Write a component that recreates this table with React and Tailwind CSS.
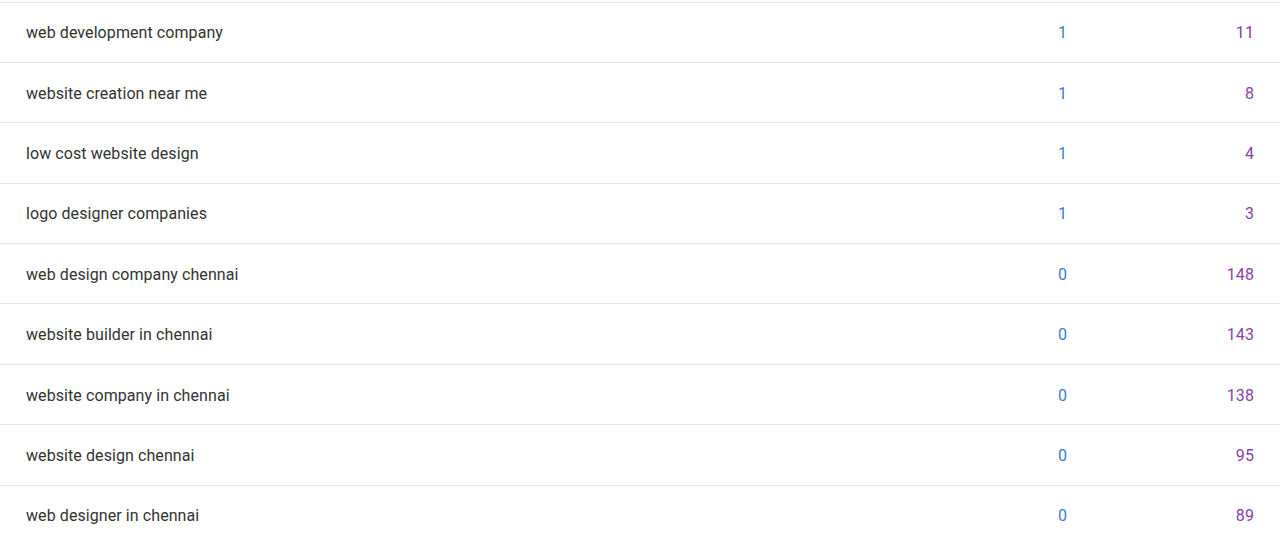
import React from "react";

const rows = [
  { query: "web development company", clicks: 1, impressions: 11 },
  { query: "website creation near me", clicks: 1, impressions: 8 },
  { query: "low cost website design", clicks: 1, impressions: 4 },
  { query: "logo designer companies", clicks: 1, impressions: 3 },
  { query: "web design company chennai", clicks: 0, impressions: 148 },
  { query: "website builder in chennai", clicks: 0, impressions: 143 },
  { query: "website company in chennai", clicks: 0, impressions: 138 },
  { query: "website design chennai", clicks: 0, impressions: 95 },
  { query: "web designer in chennai", clicks: 0, impressions: 89 },
];

export default function App() {
  return (
    <div className="h-[533px] overflow-hidden bg-white pt-[1.5px] font-['Roboto',sans-serif] text-[16px] tracking-[0.08px]">
      {rows.map((row) => (
        <div
          key={row.query}
          className="flex h-[60.4px] items-center border-t border-[#e6e6e6] pl-[26px] pr-[26px] pt-[2px]"
        >
          <div className="flex-1 text-[#333333]">{row.query}</div>
          <div className="w-[121px] text-right text-[#3b7ad6]">{row.clicks}</div>
          <div className="w-[187px] text-right text-[#8a3fae]">{row.impressions}</div>
        </div>
      ))}
    </div>
  );
}
